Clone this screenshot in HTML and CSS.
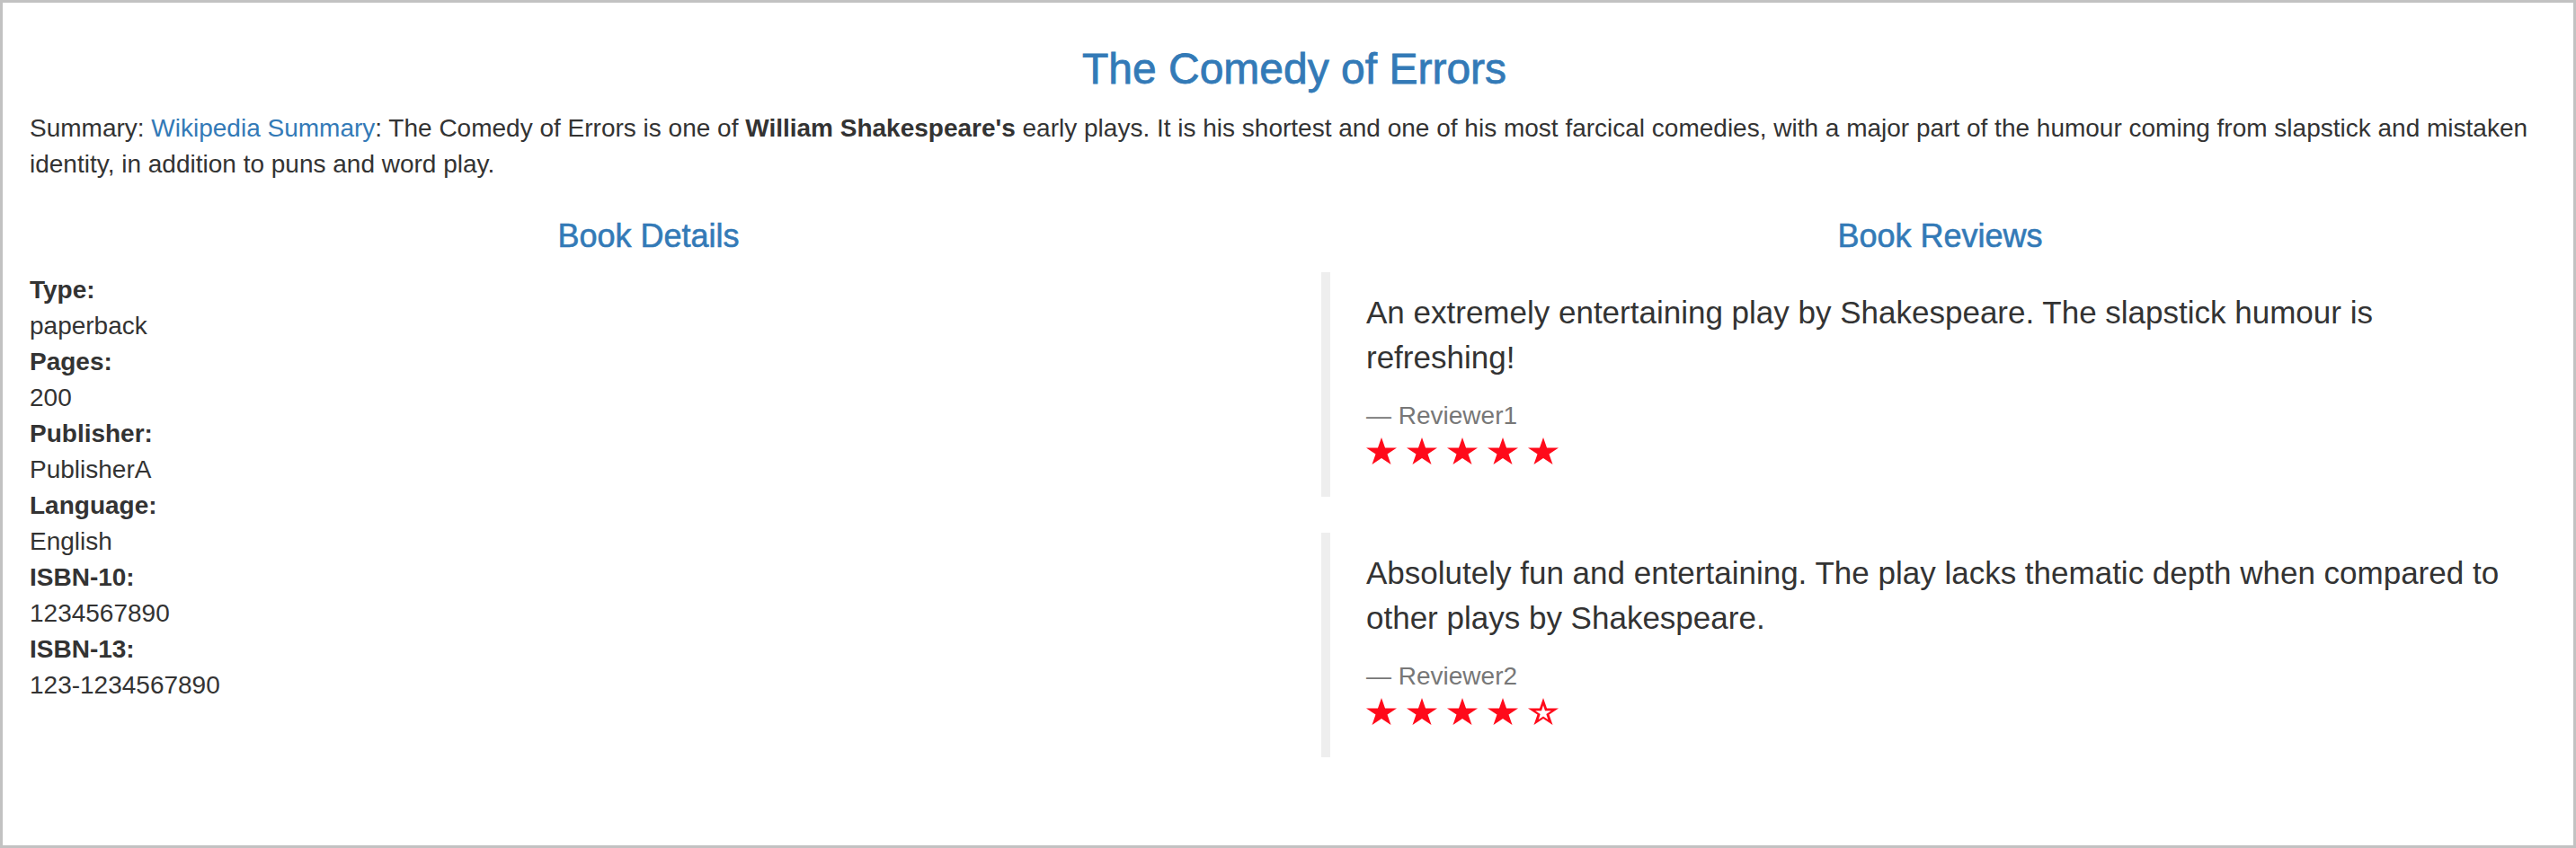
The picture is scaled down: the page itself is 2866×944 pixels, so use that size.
FILE: index.html
```html
<!DOCTYPE html>
<html>
<head>
<meta charset="utf-8">
<title>Simple Bookstore App</title>
<link rel="stylesheet" href="styles.css">
</head>
<body>
<div class="frame">
  <div class="container">
    <div class="intro">
      <h3 class="title">The Comedy of Errors</h3>
      <p class="summary">Summary: <a href="#">Wikipedia Summary</a>: The Comedy of Errors is one of <b>William Shakespeare's</b> early plays. It is his shortest and one of his most farcical comedies, with a major part of the humour coming from slapstick and mistaken identity, in addition to puns and word play.</p>
    </div>
    <div class="row">
      <div class="col">
        <h4 class="heading">Book Details</h4>
        <dl class="details">
          <dt>Type:</dt><dd>paperback</dd>
          <dt>Pages:</dt><dd>200</dd>
          <dt>Publisher:</dt><dd>PublisherA</dd>
          <dt>Language:</dt><dd>English</dd>
          <dt>ISBN-10:</dt><dd>1234567890</dd>
          <dt>ISBN-13:</dt><dd>123-1234567890</dd>
        </dl>
      </div>
      <div class="col">
        <h4 class="heading">Book Reviews</h4>
        <blockquote class="review">
          <p>An extremely entertaining play by Shakespeare. The slapstick humour is refreshing!</p>
          <small>Reviewer1</small>
          <div class="stars">
            <svg class="star" viewBox="0 0 34 30"><polygon points="17,0 21.02,11.47 34.02,11.47 23.5,18.56 27.53,30.03 17,22.94 6.47,30.03 10.5,18.56 0,11.47 12.98,11.47"/></svg>
            <svg class="star" viewBox="0 0 34 30"><polygon points="17,0 21.02,11.47 34.02,11.47 23.5,18.56 27.53,30.03 17,22.94 6.47,30.03 10.5,18.56 0,11.47 12.98,11.47"/></svg>
            <svg class="star" viewBox="0 0 34 30"><polygon points="17,0 21.02,11.47 34.02,11.47 23.5,18.56 27.53,30.03 17,22.94 6.47,30.03 10.5,18.56 0,11.47 12.98,11.47"/></svg>
            <svg class="star" viewBox="0 0 34 30"><polygon points="17,0 21.02,11.47 34.02,11.47 23.5,18.56 27.53,30.03 17,22.94 6.47,30.03 10.5,18.56 0,11.47 12.98,11.47"/></svg>
            <svg class="star" viewBox="0 0 34 30"><polygon points="17,0 21.02,11.47 34.02,11.47 23.5,18.56 27.53,30.03 17,22.94 6.47,30.03 10.5,18.56 0,11.47 12.98,11.47"/></svg>
          </div>
        </blockquote>
        <blockquote class="review">
          <p>Absolutely fun and entertaining. The play lacks thematic depth when compared to other plays by Shakespeare.</p>
          <small>Reviewer2</small>
          <div class="stars">
            <svg class="star" viewBox="0 0 34 30"><polygon points="17,0 21.02,11.47 34.02,11.47 23.5,18.56 27.53,30.03 17,22.94 6.47,30.03 10.5,18.56 0,11.47 12.98,11.47"/></svg>
            <svg class="star" viewBox="0 0 34 30"><polygon points="17,0 21.02,11.47 34.02,11.47 23.5,18.56 27.53,30.03 17,22.94 6.47,30.03 10.5,18.56 0,11.47 12.98,11.47"/></svg>
            <svg class="star" viewBox="0 0 34 30"><polygon points="17,0 21.02,11.47 34.02,11.47 23.5,18.56 27.53,30.03 17,22.94 6.47,30.03 10.5,18.56 0,11.47 12.98,11.47"/></svg>
            <svg class="star" viewBox="0 0 34 30"><polygon points="17,0 21.02,11.47 34.02,11.47 23.5,18.56 27.53,30.03 17,22.94 6.47,30.03 10.5,18.56 0,11.47 12.98,11.47"/></svg>
            <svg class="star empty" viewBox="0 0 34 30"><path fill-rule="evenodd" d="M17,0 L21.02,11.47 L34.02,11.47 L23.5,18.56 L27.53,30.03 L17,22.94 L6.47,30.03 L10.5,18.56 L0,11.47 L12.98,11.47 Z M17,8.2 L19,14.3 L25.8,14.3 L20.3,18 L22.3,24 L17,20.4 L11.7,24 L13.7,18 L8.2,14.3 L15,14.3 Z"/></svg>
          </div>
        </blockquote>
      </div>
    </div>
  </div>
</div>
</body>
</html>
```

FILE: styles.css
```css
* {
  box-sizing: border-box;
}

html, body {
  margin: 0;
  padding: 0;
  background: #fff;
}

body {
  font-family: "Liberation Sans", Arial, Helvetica, sans-serif;
  font-size: 28px;
  line-height: 40px;
  color: #333;
}

.frame {
  width: 2866px;
  height: 944px;
  border: 3px solid #c2c2c2;
  overflow: hidden;
}

.container {
  width: 2874px;
  padding: 0 30px;
}

.intro {
  padding-top: 47px;
}

.title {
  margin: 0 0 20px;
  font-size: 48px;
  line-height: 53px;
  font-weight: 500;
  text-align: center;
  color: #337ab7;
  -webkit-text-stroke: 0.8px #337ab7;
}

.summary {
  margin: 0 0 20px;
}

.summary a {
  color: #337ab7;
  text-decoration: none;
}

.summary b {
  font-weight: 700;
}

.row {
  display: grid;
  grid-template-columns: 1fr 1fr;
  margin: 0 -30px;
}

.col {
  padding: 0 30px;
  min-width: 0;
}

.heading {
  margin: 20px 0 20px;
  font-size: 36px;
  line-height: 40px;
  font-weight: 500;
  text-align: center;
  color: #337ab7;
  -webkit-text-stroke: 0.6px #337ab7;
}

.details {
  margin: 0 0 40px;
}

.details dt {
  font-weight: 700;
}

.details dd {
  margin: 0;
}

.review {
  margin: 0 0 40px;
  padding: 20px 40px;
  border-left: 10px solid #eee;
  font-size: 35px;
  line-height: 50px;
}

.review p {
  margin: 0 0 20px;
}

.review small {
  display: block;
  font-size: 28px;
  line-height: 40px;
  color: #777;
}

.review small::before {
  content: "\2014\00A0";
}

.stars {
  display: flex;
  gap: 11px;
  height: 50px;
  padding-top: 4px;
}

.star {
  width: 34px;
  height: 30px;
  fill: #ff0a1a;
}
```
